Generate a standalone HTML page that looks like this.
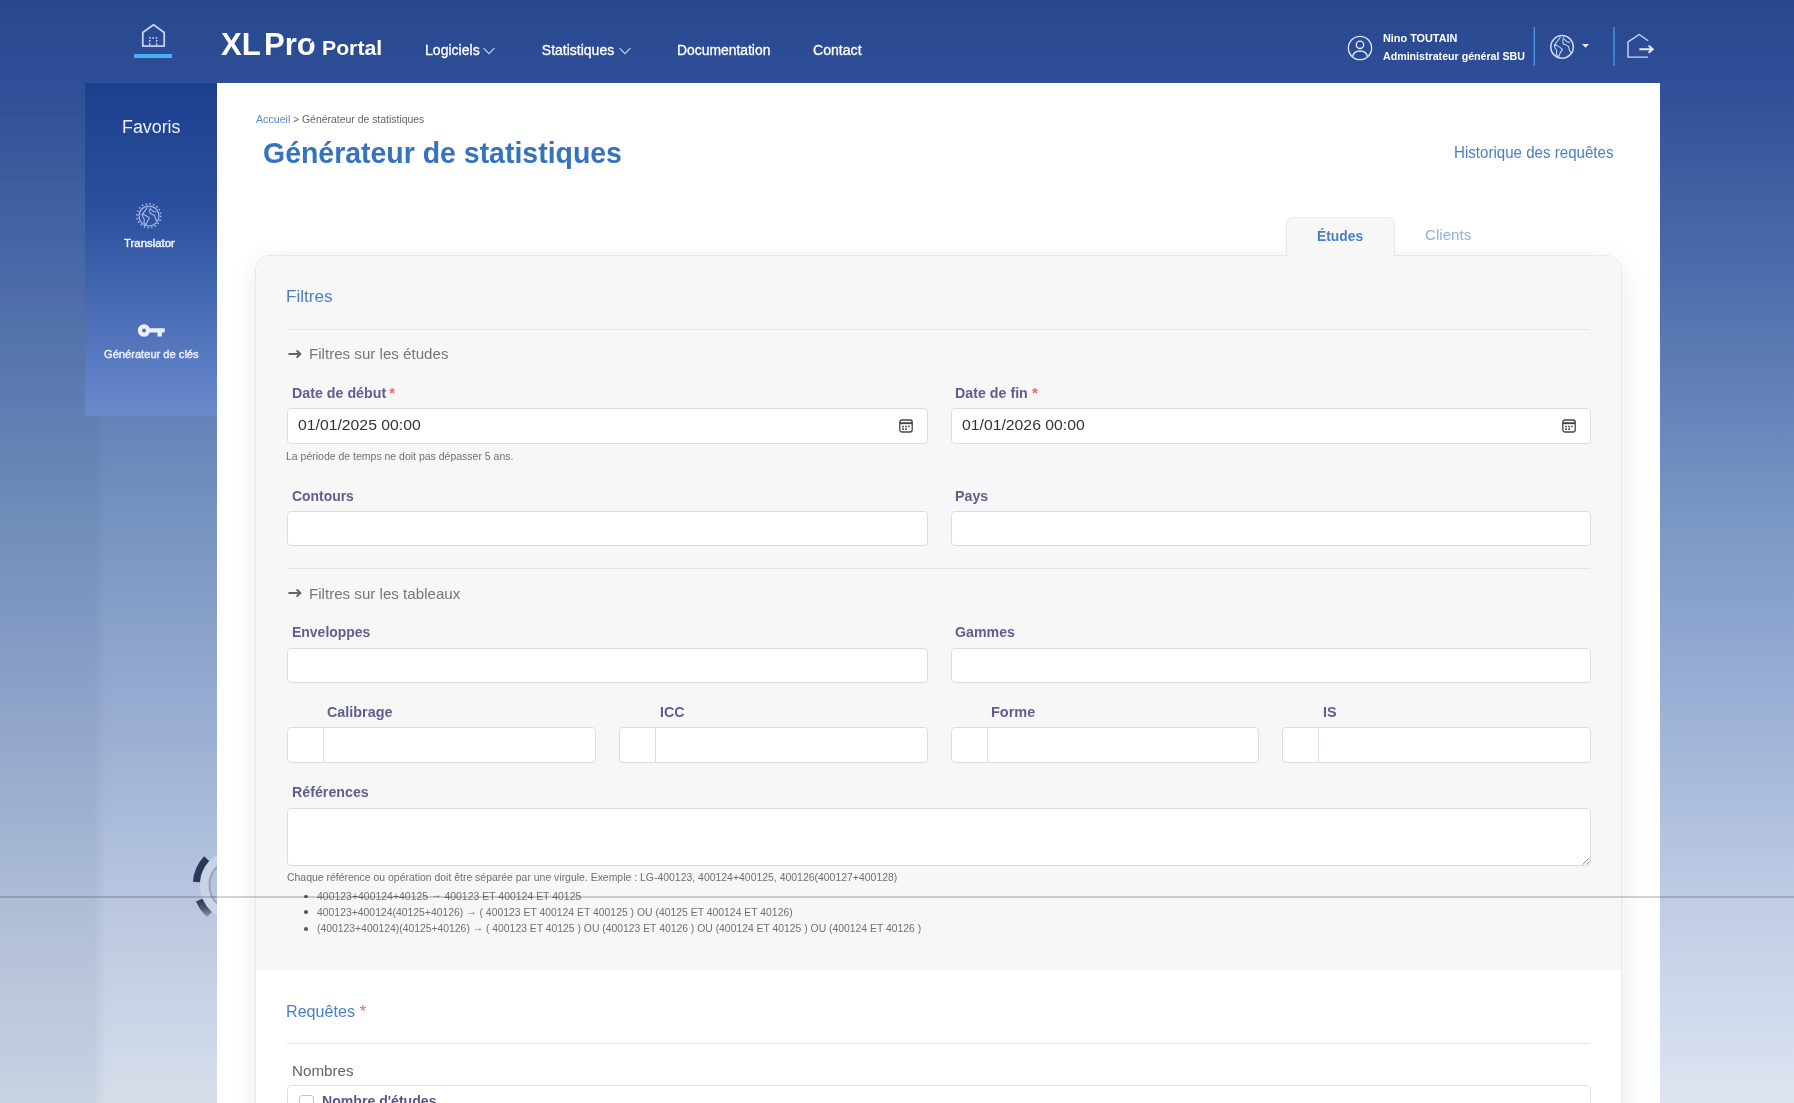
<!DOCTYPE html>
<html lang="fr">
<head>
<meta charset="utf-8">
<title>XL Pro Portal - Générateur de statistiques</title>
<style>
*{box-sizing:border-box;margin:0;padding:0}
html,body{width:1794px;height:1103px;overflow:hidden}
body{font-family:"Liberation Sans",sans-serif;position:relative;
  background:linear-gradient(180deg,#27488f 0px,#2f5098 90px,#4d6eac 280px,#7b97c5 520px,#a1b5d8 740px,#c2cfe6 920px,#dee4f1 1103px);}
#txt{position:absolute;left:0;top:0;width:1794px;height:1103px;will-change:transform}
.tx{position:absolute;white-space:nowrap;line-height:1;transform-origin:0 50%;display:inline-block}
svg{position:absolute;overflow:visible}
/* sidebar */
#side{position:absolute;left:85px;top:83px;width:132px;height:333px;
  background:linear-gradient(180deg,#1c3f8e 0,#2a4d9c 35%,#4f72ba 75%,#6a8acd 100%)}
/* main */
#main{position:absolute;left:217px;top:83px;width:1443px;height:1020px;background:#fff;overflow:hidden}
#card{position:absolute;left:38px;top:172px;width:1366.5px;height:900px;background:#fff;border-radius:16px 16px 0 0;
  box-shadow:0 6px 26px rgba(0,0,0,.085);border:1px solid #e8e8e8;border-bottom:0}
#gray{position:absolute;left:0;top:0;width:1364.5px;height:714px;background:#f7f7f7;border-radius:15px 15px 0 0}
#tab{position:absolute;left:1286px;top:216.5px;width:108.7px;height:40px;background:#f7f7f7;border:1px solid #e9e9e9;border-bottom:0;border-radius:7px 7px 0 0}
.hr{position:absolute;left:287px;width:1303px;height:1px;background:#e5e5e7}
.inp{position:absolute;background:#fff;border:1px solid #dcdce6;border-radius:4px}
.dv{position:absolute;width:1px;background:#dcdce6}
</style>
</head>
<body>
<!-- left door shading -->
<div style="position:absolute;left:0;top:83px;width:217px;height:1020px;background:linear-gradient(90deg,rgba(30,58,100,.105) 0,rgba(30,58,100,.105) 43%,rgba(30,58,100,.035) 49%,rgba(30,58,100,.035) 100%);-webkit-mask-image:linear-gradient(180deg,transparent 0,#000 38%);mask-image:linear-gradient(180deg,transparent 0,#000 38%)"></div>
<!-- background lock detail -->
<svg width="60" height="110" style="left:180px;top:835px" viewBox="180 835 60 110" fill="none">
  <defs><linearGradient id="lk" x1="0" y1="899" x2="0" y2="916" gradientUnits="userSpaceOnUse"><stop offset="0" stop-color="#2c3856"/><stop offset=".55" stop-color="#4a566f"/><stop offset="1" stop-color="#8d98ab"/></linearGradient></defs>
  <circle cx="235.4" cy="885.2" r="31" stroke="#dde4f2" stroke-width="9" opacity=".5"/>
  <circle cx="235.4" cy="885.2" r="26" stroke="#8e9ab2" stroke-width="2" opacity=".75"/>
  <path d="M206.6 858.7A39.1 39.1 0 0 0 196.4 882" stroke="#2b3756" stroke-width="7"/>
  <path d="M199.3 900.2A39.1 39.1 0 0 0 209.5 914.5" stroke="url(#lk)" stroke-width="7"/>
</svg>

<!-- SIDEBAR -->
<div id="side"></div>

<!-- MAIN -->
<div id="main">
  <div id="card"><div id="gray"></div></div>
</div>
<div id="tab"></div>

<!-- rules -->
<div class="hr" style="top:329px"></div>
<div class="hr" style="top:568px"></div>
<div class="hr" style="top:1043px"></div>

<!-- inputs -->
<div class="inp" style="left:286.5px;top:408px;width:641px;height:35.5px"></div>
<div class="inp" style="left:950.5px;top:408px;width:640px;height:35.5px"></div>
<div class="inp" style="left:286.5px;top:510.5px;width:641px;height:35.5px"></div>
<div class="inp" style="left:950.5px;top:510.5px;width:640px;height:35.5px"></div>
<div class="inp" style="left:286.5px;top:647.5px;width:641px;height:35.5px"></div>
<div class="inp" style="left:950.5px;top:647.5px;width:640px;height:35.5px"></div>
<div class="inp" style="left:286.5px;top:727px;width:309px;height:35.5px"></div><div class="dv" style="left:322.5px;top:727px;height:35.5px"></div>
<div class="inp" style="left:618.5px;top:727px;width:309px;height:35.5px"></div><div class="dv" style="left:654.5px;top:727px;height:35.5px"></div>
<div class="inp" style="left:950.5px;top:727px;width:308.5px;height:35.5px"></div><div class="dv" style="left:986.5px;top:727px;height:35.5px"></div>
<div class="inp" style="left:1281.5px;top:727px;width:309px;height:35.5px"></div><div class="dv" style="left:1317.5px;top:727px;height:35.5px"></div>
<div class="inp" style="left:286.5px;top:807.5px;width:1304px;height:58px"></div>
<!-- Nombres box -->
<div class="inp" style="left:286.5px;top:1085px;width:1304px;height:40px;border-color:#dedee4"></div>
<div style="position:absolute;left:299px;top:1095px;width:15px;height:15px;border:1px solid #c2c2c8;border-radius:3.5px;background:#fff"></div>

<!-- ICONS -->
<!-- home -->
<svg width="30" height="30" style="left:138px;top:20px" viewBox="138 20 30 30" fill="none" stroke="#c6cff6" stroke-width="1.8">
  <path d="M142.8 46.1V32.4L153.5 24.7L164.2 32.4V46.1Z" stroke-linejoin="round"/>
  <path d="M149.7 45V38H156.6V45" stroke-dasharray="1.7 1.5" stroke-width="1.5"/>
</svg>
<div style="position:absolute;left:134px;top:54px;width:38px;height:4px;background:#45b2f7"></div>
<!-- chevrons -->
<svg width="12" height="8" style="left:483px;top:47px" viewBox="0 0 12 8" fill="none" stroke="#cbd4f0" stroke-width="1.1"><path d="M.6 1.2L6 6.6L11.4 1.2"/></svg>
<svg width="12" height="8" style="left:618.5px;top:47px" viewBox="0 0 12 8" fill="none" stroke="#cbd4f0" stroke-width="1.1"><path d="M.6 1.2L6 6.6L11.4 1.2"/></svg>
<!-- user -->
<svg width="26" height="26" style="left:1347px;top:34.7px" viewBox="0 0 26 26" fill="none" stroke="#dfe6fd" stroke-width="1.4">
  <circle cx="13" cy="13" r="11.6"/><circle cx="13" cy="9.8" r="3.7"/>
  <path d="M5.6 21.6C6.4 17.6 9.2 16 13 16S19.6 17.6 20.4 21.6"/>
</svg>
<!-- separators -->
<svg width="90" height="42" style="left:1530px;top:26px" viewBox="1530 26 90 42"><rect x="1533.6" y="27.2" width="1.45" height="38.6" fill="#4a93e3"/><rect x="1613.2" y="27.2" width="1.45" height="38.6" fill="#4a93e3"/></svg>
<!-- globe -->
<svg width="28" height="28" style="left:1548px;top:33px" viewBox="-14 -14 28 28" fill="none" stroke="#cdd7fb" stroke-width="1.05" stroke-linejoin="round" stroke-linecap="round">
  <g transform="translate(.05 -.1)"><circle cx="0" cy="0" r="11.3" stroke-width="1.5"/><path d="M-2 -9.4L-5 -5.2L-7.7 -1.8L-7 .8L-5.3 3.9L-5.7 7.5L-3.9 9.6M-7.7 -1.8L-6 -1.8L-2 .5L.4 2.5L-2 6.2L-3.3 9.6"/><path d="M1.4 -9.3L.7 -5.8L1.4 -2.8L4 -1.8L6.4 -.5L7.4 3.5L8.6 5.2M2.4 -7.5L4.7 -5.2L7.6 -4.4"/></g>
</svg>
<svg width="8" height="5" style="left:1581.5px;top:43.6px" viewBox="0 0 8 5"><path d="M0 0H7L3.5 3.8Z" fill="#eaefff"/></svg>
<!-- logout -->
<svg width="32" height="30" style="left:1624px;top:31px" viewBox="1624 31 32 30" fill="none" stroke="#cdd7fb" stroke-width="1.4">
  <path d="M1648 57.1H1628V41.9L1639.2 34.5L1648.2 40.8"/>
  <path d="M1639.4 49.2H1652.6M1648.6 45.6L1652.8 49.2L1648.6 52.8" stroke="#e6ecff" stroke-width="1.9"/>
</svg>
<!-- translator icon -->
<svg width="30" height="30" style="left:134.1px;top:200.5px" viewBox="-15 -15 30 30" fill="none" stroke="#abc0f3" stroke-width="1.15" stroke-linejoin="round" stroke-linecap="round">
  <circle cx="-.1" cy="-.2" r="12" stroke-dasharray="1.4 2.37" stroke-width="1.5" stroke-linecap="butt"/>
  <circle cx="0" cy="0" r="10"/><g transform="scale(.885)"><path d="M-2 -9.4L-5 -5.2L-7.7 -1.8L-7 .8L-5.3 3.9L-5.7 7.5L-3.9 9.6M-7.7 -1.8L-6 -1.8L-2 .5L.4 2.5L-2 6.2L-3.3 9.6"/><path d="M1.4 -9.3L.7 -5.8L1.4 -2.8L4 -1.8L6.4 -.5L7.4 3.5L8.6 5.2M2.4 -7.5L4.7 -5.2L7.6 -4.4"/></g>
</svg>
<!-- key icon -->
<svg width="30" height="16" style="left:136px;top:322px" viewBox="136 322 30 16">
  <path fill="#eaf0ff" fill-rule="evenodd" d="M144 324.3a6.2 6.2 0 1 0 0 12.4a6.2 6.2 0 0 0 5.8-4.2H157.5V336.6H161.8V332.5H164.8V328.3H149.7A6.2 6.2 0 0 0 144 324.3ZM144 328.5a2 2 0 1 1 0 4a2 2 0 0 1 0-4Z"/>
</svg>
<!-- arrows -->
<svg width="14" height="10" style="left:287.5px;top:349.3px" viewBox="0 0 14 10" fill="none" stroke="#666" stroke-width="2" stroke-linecap="round" stroke-linejoin="round"><path d="M1.2 5H12.2M9.2 2L12.4 5L9.2 8"/></svg>
<svg width="14" height="10" style="left:287.5px;top:588.3px" viewBox="0 0 14 10" fill="none" stroke="#666" stroke-width="2" stroke-linecap="round" stroke-linejoin="round"><path d="M1.2 5H12.2M9.2 2L12.4 5L9.2 8"/></svg>
<!-- calendar icons -->
<svg width="14" height="14" style="left:899px;top:418.8px" viewBox="0 0 14 14" fill="none" stroke="#444" stroke-width="1.3"><rect x=".8" y="1" width="12.4" height="12" rx="2.2"/><path d="M.8 4.2H13.2" stroke-width="1.9"/><path d="M3.2 6.7h1.7v1.6h-1.7zM3.2 9.3h1.7v1.6h-1.7zM6.2 6.7h1.7v1.6h-1.7zM6.2 9.3h1.7v1.6h-1.7zM9.2 6.7h1.5v1.5h-1.5z" fill="#444" stroke="none"/></svg>
<svg width="14" height="14" style="left:1562px;top:418.8px" viewBox="0 0 14 14" fill="none" stroke="#444" stroke-width="1.3"><rect x=".8" y="1" width="12.4" height="12" rx="2.2"/><path d="M.8 4.2H13.2" stroke-width="1.9"/><path d="M3.2 6.7h1.7v1.6h-1.7zM3.2 9.3h1.7v1.6h-1.7zM6.2 6.7h1.7v1.6h-1.7zM6.2 9.3h1.7v1.6h-1.7zM9.2 6.7h1.5v1.5h-1.5z" fill="#444" stroke="none"/></svg>
<!-- textarea grip -->
<svg width="8" height="8" style="left:1581.5px;top:856.5px" viewBox="0 0 8 8" fill="none" stroke="#777" stroke-width=".9"><path d="M7.5 .8L.8 7.5M7.5 4.4L4.4 7.5"/></svg>
<!-- bullets -->
<div style="position:absolute;left:304px;top:894.7px;width:3.6px;height:3.6px;border-radius:50%;background:#5c5c5c"></div>
<div style="position:absolute;left:304px;top:910.3px;width:3.6px;height:3.6px;border-radius:50%;background:#5c5c5c"></div>
<div style="position:absolute;left:304px;top:927.1px;width:3.6px;height:3.6px;border-radius:50%;background:#5c5c5c"></div>

<!-- TEXT -->
<div id="txt">
<span class="tx" style="left:220.6px;top:28.74px;font-size:31.5px;font-weight:bold;color:#fff;transform:scaleX(0.9894);">XL</span>
<span class="tx" style="left:264.4px;top:28.74px;font-size:31.5px;font-weight:bold;color:#fff;transform:scaleX(0.9844);">Pro</span>
<span class="tx" style="left:321.6px;top:37.83px;font-size:20.7px;font-weight:bold;color:#fff;transform:scaleX(1.0260);">Portal</span>
<span class="tx" style="left:424.9px;top:43.15px;font-size:14.0px;font-weight:normal;color:#fff;transform:scaleX(1.0037);-webkit-text-stroke:.3px currentColor;">Logiciels</span>
<span class="tx" style="left:541.8px;top:43.15px;font-size:14.0px;font-weight:normal;color:#fff;transform:scaleX(1.0000);-webkit-text-stroke:.3px currentColor;">Statistiques</span>
<span class="tx" style="left:677.1px;top:43.15px;font-size:14.0px;font-weight:normal;color:#fff;transform:scaleX(0.9915);-webkit-text-stroke:.3px currentColor;">Documentation</span>
<span class="tx" style="left:813.4px;top:43.15px;font-size:14.0px;font-weight:normal;color:#fff;transform:scaleX(1.0063);-webkit-text-stroke:.3px currentColor;">Contact</span>
<span class="tx" style="left:1382.5px;top:32.48px;font-size:11.6px;font-weight:bold;color:#fff;transform:scaleX(0.9365);">Nino TOUTAIN</span>
<span class="tx" style="left:1382.5px;top:49.68px;font-size:11.6px;font-weight:bold;color:#fff;transform:scaleX(0.9179);">Administrateur général SBU</span>
<span class="tx" style="left:121.6px;top:118.16px;font-size:18.0px;font-weight:normal;color:#eef2ff;transform:scaleX(0.9915);">Favoris</span>
<span class="tx" style="left:124.0px;top:238.01px;font-size:11.8px;font-weight:normal;color:#eef2ff;transform:scaleX(0.9640);-webkit-text-stroke:.5px currentColor;">Translator</span>
<span class="tx" style="left:103.8px;top:348.51px;font-size:11.8px;font-weight:normal;color:#e6ecfb;transform:scaleX(0.9429);-webkit-text-stroke:.5px currentColor;">Générateur de clés</span>
<span class="tx" style="left:255.6px;top:114.53px;font-size:10.0px;font-weight:normal;color:#5b8acb;transform:scaleX(1.0656);">Accueil</span>
<span class="tx" style="left:292.9px;top:114.53px;font-size:10.0px;font-weight:normal;color:#666;transform:scaleX(1.0429);">&gt; Générateur de statistiques</span>
<span class="tx" style="left:263.0px;top:137.81px;font-size:29.4px;font-weight:bold;color:#3573bf;transform:scaleX(0.9681);">Générateur de statistiques</span>
<span class="tx" style="left:1454.3px;top:144.81px;font-size:15.7px;font-weight:normal;color:#4a7fc1;transform:scaleX(0.9626);">Historique des requêtes</span>
<span class="tx" style="left:1317.1px;top:228.64px;font-size:14.6px;font-weight:bold;color:#4a7fc3;transform:scaleX(0.9476);">Études</span>
<span class="tx" style="left:1424.8px;top:227.56px;font-size:14.7px;font-weight:normal;color:#8fb1de;transform:scaleX(1.0319);">Clients</span>
<span class="tx" style="left:286.2px;top:288.41px;font-size:17.0px;font-weight:normal;color:#4a80c4;transform:scaleX(1.0076);">Filtres</span>
<span class="tx" style="left:308.8px;top:345.90px;font-size:15.0px;font-weight:normal;color:#777;transform:scaleX(1.0076);">Filtres sur les études</span>
<span class="tx" style="left:308.8px;top:585.60px;font-size:15.0px;font-weight:normal;color:#777;transform:scaleX(1.0083);">Filtres sur les tableaux</span>
<span class="tx" style="left:291.7px;top:385.67px;font-size:14.8px;font-weight:bold;color:#5f5e8f;transform:scaleX(0.9627);">Date de début</span>
<span class="tx" style="left:389.3px;top:385.67px;font-size:14.8px;font-weight:bold;color:#e26b6b;transform:scaleX(1.0000);">*</span>
<span class="tx" style="left:955.0px;top:385.67px;font-size:14.8px;font-weight:bold;color:#5f5e8f;transform:scaleX(0.9624);">Date de fin</span>
<span class="tx" style="left:1031.9px;top:385.67px;font-size:14.8px;font-weight:bold;color:#e26b6b;transform:scaleX(1.0000);">*</span>
<span class="tx" style="left:298.3px;top:417.30px;font-size:15.0px;font-weight:normal;color:#333;transform:scaleX(1.0509);">01/01/2025 00:00</span>
<span class="tx" style="left:961.9px;top:417.30px;font-size:15.0px;font-weight:normal;color:#333;transform:scaleX(1.0509);">01/01/2026 00:00</span>
<span class="tx" style="left:286.3px;top:451.57px;font-size:10.2px;font-weight:normal;color:#707070;transform:scaleX(1.0295);">La période de temps ne doit pas dépasser 5 ans.</span>
<span class="tx" style="left:291.7px;top:488.67px;font-size:14.8px;font-weight:bold;color:#5f5e8f;transform:scaleX(0.9400);">Contours</span>
<span class="tx" style="left:954.7px;top:488.67px;font-size:14.8px;font-weight:bold;color:#5f5e8f;transform:scaleX(0.9611);">Pays</span>
<span class="tx" style="left:291.7px;top:624.67px;font-size:14.8px;font-weight:bold;color:#5f5e8f;transform:scaleX(0.9439);">Enveloppes</span>
<span class="tx" style="left:954.9px;top:624.67px;font-size:14.8px;font-weight:bold;color:#5f5e8f;transform:scaleX(0.9594);">Gammes</span>
<span class="tx" style="left:327.3px;top:705.37px;font-size:14.8px;font-weight:bold;color:#5f5e8f;transform:scaleX(0.9707);">Calibrage</span>
<span class="tx" style="left:659.5px;top:705.37px;font-size:14.8px;font-weight:bold;color:#5f5e8f;transform:scaleX(0.9656);">ICC</span>
<span class="tx" style="left:990.8px;top:705.37px;font-size:14.8px;font-weight:bold;color:#5f5e8f;transform:scaleX(0.9787);">Forme</span>
<span class="tx" style="left:1322.8px;top:705.37px;font-size:14.8px;font-weight:bold;color:#5f5e8f;transform:scaleX(0.9743);">IS</span>
<span class="tx" style="left:291.7px;top:784.97px;font-size:14.8px;font-weight:bold;color:#5f5e8f;transform:scaleX(0.9618);">Références</span>
<span class="tx" style="left:286.5px;top:873.17px;font-size:10.2px;font-weight:normal;color:#707070;transform:scaleX(1.0252);">Chaque référence ou opération doit être séparée par une virgule. Exemple : LG-400123, 400124+400125, 400126(400127+400128)</span>
<span class="tx" style="left:316.6px;top:891.87px;font-size:10.2px;font-weight:normal;color:#707070;transform:scaleX(1.0269);">400123+400124+40125 <span style="position:relative;top:-1.6px">→</span> 400123 ET 400124 ET 40125</span>
<span class="tx" style="left:316.6px;top:908.17px;font-size:10.2px;font-weight:normal;color:#707070;transform:scaleX(1.0208);">400123+400124(40125+40126) <span style="position:relative;top:-1.6px">→</span> ( 400123 ET 400124 ET 400125 ) OU (40125 ET 400124 ET 40126)</span>
<span class="tx" style="left:316.6px;top:924.27px;font-size:10.2px;font-weight:normal;color:#707070;transform:scaleX(1.0181);">(400123+400124)(40125+40126) <span style="position:relative;top:-1.6px">→</span> ( 400123 ET 40125 ) OU (400123 ET 40126 ) OU (400124 ET 40125 ) OU (400124 ET 40126 )</span>
<span class="tx" style="left:286.2px;top:1002.81px;font-size:17.0px;font-weight:normal;color:#4a80c4;transform:scaleX(0.9473);">Requêtes</span>
<span class="tx" style="left:359.6px;top:1002.81px;font-size:17.0px;font-weight:normal;color:#e26b6b;transform:scaleX(1.0000);">*</span>
<span class="tx" style="left:291.7px;top:1063.10px;font-size:15.0px;font-weight:normal;color:#636363;transform:scaleX(1.0123);">Nombres</span>
<span class="tx" style="left:321.5px;top:1093.97px;font-size:14.8px;font-weight:bold;color:#56558a;transform:scaleX(0.9520);">Nombre d'études</span>
</div>

<!-- logo o notch -->
<svg width="10" height="10" style="left:308px;top:36px" viewBox="308 36 10 10"><path d="M310.2 43L313.6 38.2" stroke="#2a4b93" stroke-width="1.5" fill="none"/></svg>
<!-- stitch line -->
<div style="position:absolute;left:0;top:896px;width:1794px;height:2px;background:rgba(30,35,50,.2)"></div>
</body>
</html>
